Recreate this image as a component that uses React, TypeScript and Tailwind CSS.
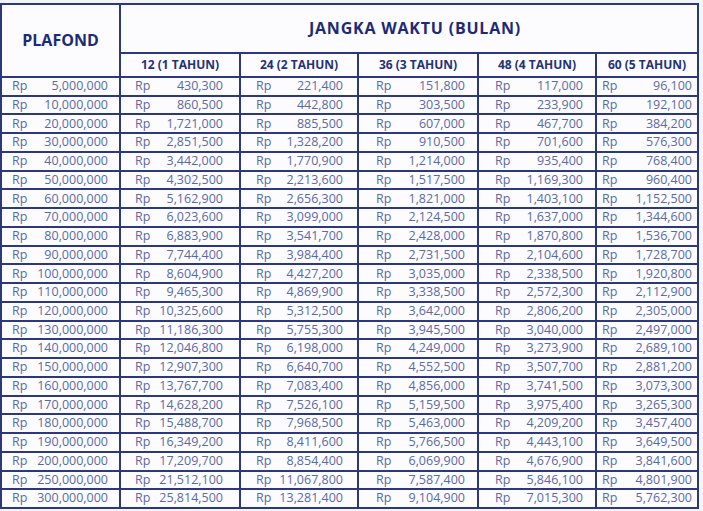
import {memo} from 'react';

type Row = [string, string, string, string, string, string];

const ROWS: Row[] = [
  ['5,000,000', '430,300', '221,400', '151,800', '117,000', '96,100'],
  ['10,000,000', '860,500', '442,800', '303,500', '233,900', '192,100'],
  ['20,000,000', '1,721,000', '885,500', '607,000', '467,700', '384,200'],
  ['30,000,000', '2,851,500', '1,328,200', '910,500', '701,600', '576,300'],
  ['40,000,000', '3,442,000', '1,770,900', '1,214,000', '935,400', '768,400'],
  ['50,000,000', '4,302,500', '2,213,600', '1,517,500', '1,169,300', '960,400'],
  ['60,000,000', '5,162,900', '2,656,300', '1,821,000', '1,403,100', '1,152,500'],
  ['70,000,000', '6,023,600', '3,099,000', '2,124,500', '1,637,000', '1,344,600'],
  ['80,000,000', '6,883,900', '3,541,700', '2,428,000', '1,870,800', '1,536,700'],
  ['90,000,000', '7,744,400', '3,984,400', '2,731,500', '2,104,600', '1,728,700'],
  ['100,000,000', '8,604,900', '4,427,200', '3,035,000', '2,338,500', '1,920,800'],
  ['110,000,000', '9,465,300', '4,869,900', '3,338,500', '2,572,300', '2,112,900'],
  ['120,000,000', '10,325,600', '5,312,500', '3,642,000', '2,806,200', '2,305,000'],
  ['130,000,000', '11,186,300', '5,755,300', '3,945,500', '3,040,000', '2,497,000'],
  ['140,000,000', '12,046,800', '6,198,000', '4,249,000', '3,273,900', '2,689,100'],
  ['150,000,000', '12,907,300', '6,640,700', '4,552,500', '3,507,700', '2,881,200'],
  ['160,000,000', '13,767,700', '7,083,400', '4,856,000', '3,741,500', '3,073,300'],
  ['170,000,000', '14,628,200', '7,526,100', '5,159,500', '3,975,400', '3,265,300'],
  ['180,000,000', '15,488,700', '7,968,500', '5,463,000', '4,209,200', '3,457,400'],
  ['190,000,000', '16,349,200', '8,411,600', '5,766,500', '4,443,100', '3,649,500'],
  ['200,000,000', '17,209,700', '8,854,400', '6,069,900', '4,676,900', '3,841,600'],
  ['250,000,000', '21,512,100', '11,067,800', '7,587,400', '5,846,100', '4,801,900'],
  ['300,000,000', '25,814,500', '13,281,400', '9,104,900', '7,015,300', '5,762,300'],
];

const TERMS = ['12 (1 TAHUN)', '24 (2 TAHUN)', '36 (3 TAHUN)', '48 (4 TAHUN)', '60 (5 TAHUN)'];

// per-column padding so "Rp" and the amounts sit where the printed table has them
const CELL_PAD = ['pl-[10px] pr-[11px]', 'pl-[14px] pr-[16px]', 'pl-[15px] pr-[14px]', 'pl-[17px] pr-[12px]', 'pl-[16px] pr-[12px]', 'pl-[5px] pr-[5px]'];

function MoneyCell({value, col}: {value: string; col: number}) {
  return (
    <div className={`bg-[#fcfcfe] flex items-center justify-between ${CELL_PAD[col]}`}>
      <span>Rp</span>
      <span>{value}</span>
    </div>
  );
}

function App() {
  return (
    <div className="w-[703px] h-[511px] bg-[#f4f5f8] pt-[3px] font-['Open_Sans',sans-serif]">
      <div className="grid w-[699px] h-[506px] grid-cols-[117px_118px_116px_118px_116px_100px] grid-rows-[47px_22px_repeat(23,minmax(0,1fr))] gap-[2px] p-[2px] bg-[#2c3878] text-[12.5px] leading-none text-[#5b69a3]">
        <div className="row-span-2 bg-[#fcfcfe] flex items-center justify-center text-[16px] font-bold text-[#1d2a76] pb-[2px]">
          PLAFOND
        </div>
        <div className="col-span-5 bg-[#fcfcfe] flex items-center justify-center text-[16px] font-bold text-[#1d2a76] tracking-[0.8px] pl-[12px] pb-[2px]">
          JANGKA WAKTU (BULAN)
        </div>
        {TERMS.map(term => (
          <div key={term} className="bg-[#fcfcfe] flex items-center justify-center text-[12px] font-bold text-[#25317a]">
            {term}
          </div>
        ))}
        {ROWS.map(row => row.map((value, col) => <MoneyCell key={`${row[0]}-${col}`} value={value} col={col} />))}
      </div>
    </div>
  );
}

export default memo(App);
